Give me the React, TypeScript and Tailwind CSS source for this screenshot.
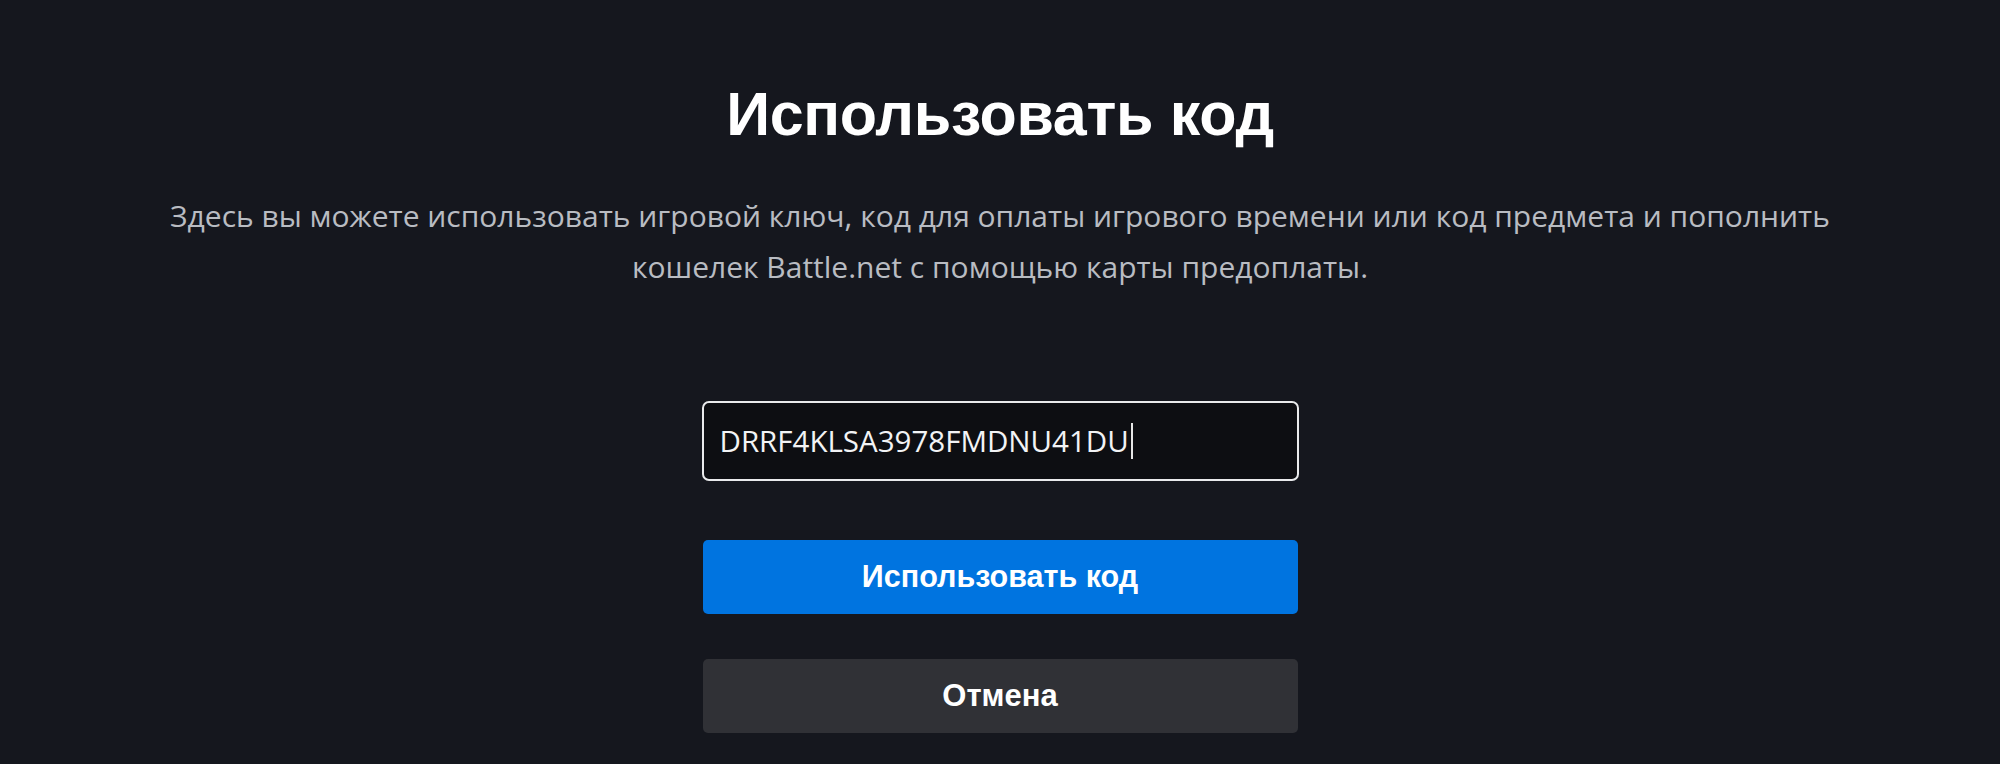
import React from 'react';

const App: React.FC = () => {
    return (
        <div className="w-full h-[764px] bg-[#15171e] flex flex-col items-center overflow-hidden">
            {/* Заголовок */}
            <h1 className="mt-[78px] text-[61px] leading-[72px] font-bold text-white font-['Liberation_Sans',Arial,sans-serif] tracking-[-0.3px]">
                Использовать код
            </h1>

            {/* Описание */}
            <p className="mt-[40px] max-w-[1800px] text-center text-[30px] leading-[51px] text-[#b9bcc2] font-['Open_Sans',sans-serif]">
                Здесь вы можете использовать игровой ключ, код для оплаты игрового времени или код предмета и пополнить
                <br />
                кошелек Battle.net с помощью карты предоплаты.
            </p>

            {/* Поле ввода и кнопки */}
            <div className="mt-[109px] w-[597px] flex flex-col">
                <div className="h-[80px] rounded-[7px] border-2 border-[#e9eaec] bg-[#0d0e12] flex items-center px-[16px]">
                    <span className="text-[29.5px] text-[#f2f3f5] font-['Open_Sans',sans-serif]">DRRF4KLSA3978FMDNU41DU</span>
                    <span className="ml-[2px] w-[2px] h-[36px] bg-[#e6e6e6]" />
                </div>

                <button className="mt-[59px] mx-[1px] h-[74px] rounded-[5px] bg-[#0074e0] text-white text-[30.5px] font-bold font-['Liberation_Sans',Arial,sans-serif]">
                    Использовать код
                </button>

                <button className="mt-[45px] mx-[1px] h-[74px] rounded-[5px] bg-[#303136] text-white text-[31px] font-bold font-['Liberation_Sans',Arial,sans-serif]">
                    Отмена
                </button>
            </div>
        </div>
    );
};

export default App;
